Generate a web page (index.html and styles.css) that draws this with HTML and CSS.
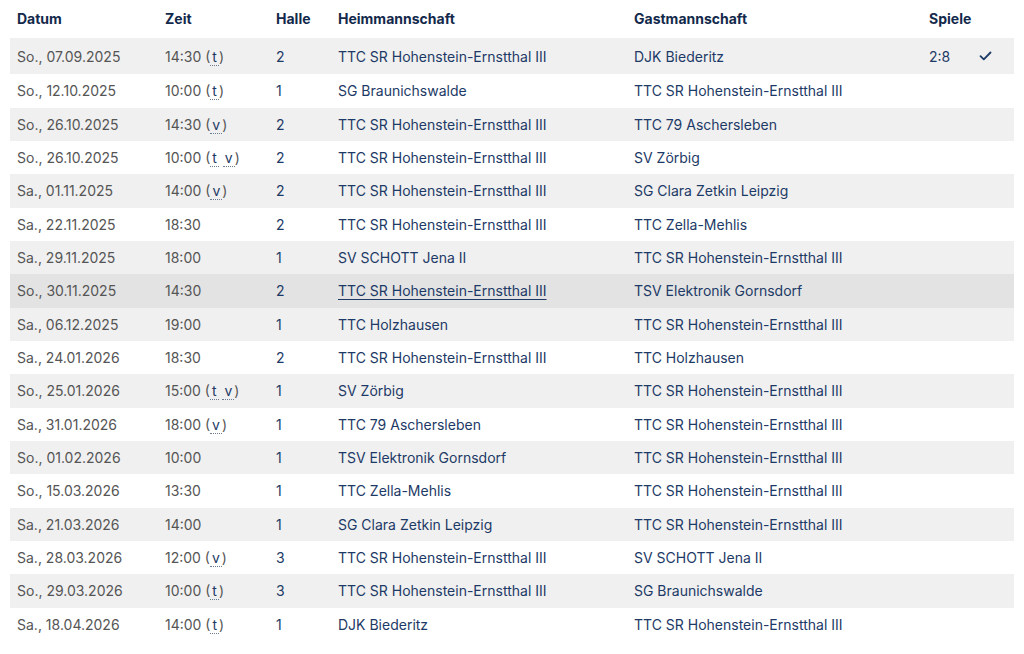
FILE: index.html
```html
<!DOCTYPE html>
<html lang="de">
<head>
<meta charset="utf-8">
<title>Spielplan</title>
<link rel="stylesheet" href="styles.css">
</head>
<body>
<table class="schedule">
  <colgroup>
    <col class="c-date"><col class="c-time"><col class="c-hall"><col class="c-home"><col class="c-guest"><col class="c-games"><col class="c-check">
  </colgroup>
  <thead>
    <tr><th>Datum</th><th>Zeit</th><th>Halle</th><th>Heimmannschaft</th><th>Gastmannschaft</th><th>Spiele</th><th></th></tr>
  </thead>
  <tbody>
    <tr class="first"><td class="date">So., 07.09.2025</td><td class="time">14:30 (<abbr>t</abbr>)</td><td class="hall">2</td><td class="team">TTC SR Hohenstein-Ernstthal III</td><td class="team">DJK Biederitz</td><td class="games">2:8</td><td class="check"><svg width="13" height="10" viewBox="0 0 13 10"><path d="M1.5 5.2 L4.8 8.3 L11.5 1.5" fill="none" stroke="#1d3a66" stroke-width="1.8" stroke-linecap="round" stroke-linejoin="round"/></svg></td></tr>
    <tr><td class="date">So., 12.10.2025</td><td class="time">10:00 (<abbr>t</abbr>)</td><td class="hall">1</td><td class="team">SG Braunichswalde</td><td class="team">TTC SR Hohenstein-Ernstthal III</td><td class="games"></td><td></td></tr>
    <tr><td class="date">So., 26.10.2025</td><td class="time">14:30 (<abbr>v</abbr>)</td><td class="hall">2</td><td class="team">TTC SR Hohenstein-Ernstthal III</td><td class="team">TTC 79 Aschersleben</td><td class="games"></td><td></td></tr>
    <tr><td class="date">So., 26.10.2025</td><td class="time">10:00 (<abbr>t</abbr> <abbr>v</abbr>)</td><td class="hall">2</td><td class="team">TTC SR Hohenstein-Ernstthal III</td><td class="team">SV Zörbig</td><td class="games"></td><td></td></tr>
    <tr><td class="date">Sa., 01.11.2025</td><td class="time">14:00 (<abbr>v</abbr>)</td><td class="hall">2</td><td class="team">TTC SR Hohenstein-Ernstthal III</td><td class="team">SG Clara Zetkin Leipzig</td><td class="games"></td><td></td></tr>
    <tr><td class="date">Sa., 22.11.2025</td><td class="time">18:30</td><td class="hall">2</td><td class="team">TTC SR Hohenstein-Ernstthal III</td><td class="team">TTC Zella-Mehlis</td><td class="games"></td><td></td></tr>
    <tr><td class="date">Sa., 29.11.2025</td><td class="time">18:00</td><td class="hall">1</td><td class="team">SV SCHOTT Jena II</td><td class="team">TTC SR Hohenstein-Ernstthal III</td><td class="games"></td><td></td></tr>
    <tr class="hover"><td class="date">So., 30.11.2025</td><td class="time">14:30</td><td class="hall">2</td><td class="team"><a href="#">TTC SR Hohenstein-Ernstthal III</a></td><td class="team">TSV Elektronik Gornsdorf</td><td class="games"></td><td></td></tr>
    <tr><td class="date">Sa., 06.12.2025</td><td class="time">19:00</td><td class="hall">1</td><td class="team">TTC Holzhausen</td><td class="team">TTC SR Hohenstein-Ernstthal III</td><td class="games"></td><td></td></tr>
    <tr><td class="date">Sa., 24.01.2026</td><td class="time">18:30</td><td class="hall">2</td><td class="team">TTC SR Hohenstein-Ernstthal III</td><td class="team">TTC Holzhausen</td><td class="games"></td><td></td></tr>
    <tr><td class="date">So., 25.01.2026</td><td class="time">15:00 (<abbr>t</abbr> <abbr>v</abbr>)</td><td class="hall">1</td><td class="team">SV Zörbig</td><td class="team">TTC SR Hohenstein-Ernstthal III</td><td class="games"></td><td></td></tr>
    <tr><td class="date">Sa., 31.01.2026</td><td class="time">18:00 (<abbr>v</abbr>)</td><td class="hall">1</td><td class="team">TTC 79 Aschersleben</td><td class="team">TTC SR Hohenstein-Ernstthal III</td><td class="games"></td><td></td></tr>
    <tr><td class="date">So., 01.02.2026</td><td class="time">10:00</td><td class="hall">1</td><td class="team">TSV Elektronik Gornsdorf</td><td class="team">TTC SR Hohenstein-Ernstthal III</td><td class="games"></td><td></td></tr>
    <tr><td class="date">So., 15.03.2026</td><td class="time">13:30</td><td class="hall">1</td><td class="team">TTC Zella-Mehlis</td><td class="team">TTC SR Hohenstein-Ernstthal III</td><td class="games"></td><td></td></tr>
    <tr><td class="date">Sa., 21.03.2026</td><td class="time">14:00</td><td class="hall">1</td><td class="team">SG Clara Zetkin Leipzig</td><td class="team">TTC SR Hohenstein-Ernstthal III</td><td class="games"></td><td></td></tr>
    <tr><td class="date">Sa., 28.03.2026</td><td class="time">12:00 (<abbr>v</abbr>)</td><td class="hall">3</td><td class="team">TTC SR Hohenstein-Ernstthal III</td><td class="team">SV SCHOTT Jena II</td><td class="games"></td><td></td></tr>
    <tr><td class="date">So., 29.03.2026</td><td class="time">10:00 (<abbr>t</abbr>)</td><td class="hall">3</td><td class="team">TTC SR Hohenstein-Ernstthal III</td><td class="team">SG Braunichswalde</td><td class="games"></td><td></td></tr>
    <tr><td class="date">Sa., 18.04.2026</td><td class="time">14:00 (<abbr>t</abbr>)</td><td class="hall">1</td><td class="team">DJK Biederitz</td><td class="team">TTC SR Hohenstein-Ernstthal III</td><td class="games"></td><td></td></tr>
  </tbody>
</table>
</body>
</html>
```

FILE: styles.css
```css
html, body {
  margin: 0;
  padding: 0;
  background: #ffffff;
}
body {
  padding: 0 10px;
  font-family: Inter, "Liberation Sans", sans-serif;
  font-size: 14px;
  color: #4d4d4d;
}
.schedule {
  width: 1004px;
  border-collapse: collapse;
  table-layout: fixed;
}
.c-date { width: 148px; }
.c-time { width: 111px; }
.c-hall { width: 62px; }
.c-home { width: 296px; }
.c-guest { width: 295px; }
.c-games { width: 50px; }
.c-check { width: 42px; }
.schedule th {
  text-align: left;
  font-weight: 700;
  color: #13294b;
  padding: 10px 7px 11px;
  line-height: 17px;
}
.schedule td {
  padding: 8px 7px;
  line-height: 17.33px;
  white-space: nowrap;
}
.schedule tbody tr:nth-child(odd) td {
  background: #f0f0f0;
}
.schedule tbody tr.first td {
  padding-top: 9.5px;
  padding-bottom: 9.5px;
}
.schedule tbody tr.hover td {
  background: #e3e3e3;
}
.date, .time {
  color: #555555;
}
.hall, .team, .games {
  color: #1d3a66;
}
.time abbr {
  color: #1d3a66;
  text-decoration: none;
  border-bottom: 1px dotted #6a7a92;
  padding: 0 2px;
  line-height: 1;
}
.team a {
  color: #1d3a66;
  text-decoration: underline;
  text-underline-offset: 3px;
  text-decoration-thickness: 1px;
}
.check svg {
  display: block;
}
```
